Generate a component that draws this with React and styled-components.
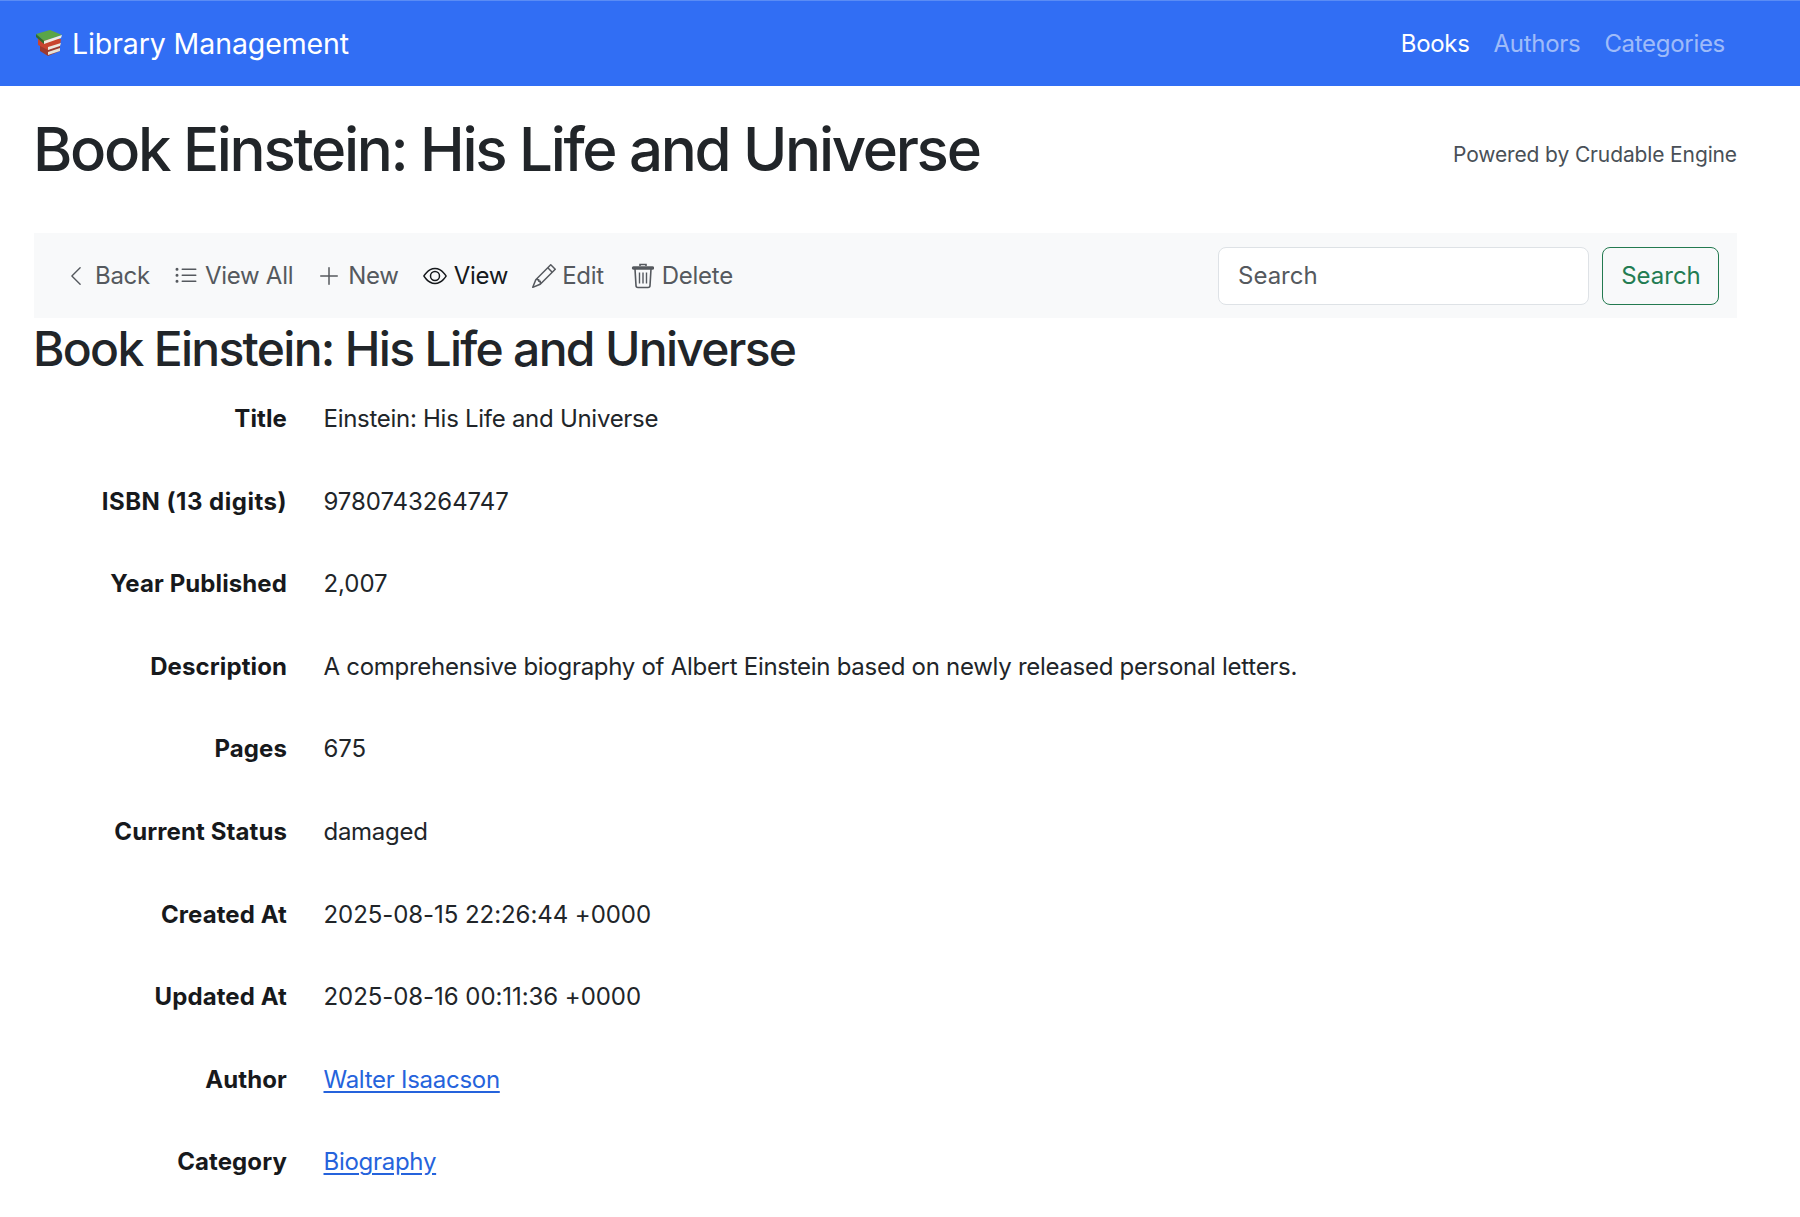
import React from "react";
import styled, { createGlobalStyle } from "styled-components";
import { BsChevronLeft, BsListUl, BsPlusLg, BsEye, BsPencil } from "react-icons/bs";

const GlobalStyle = createGlobalStyle`
  body {
    margin: 0;
    background: #fff;
    color: #212529;
    font-family: Inter, "Liberation Sans", sans-serif;
    font-size: 24px;
    line-height: 36px;
  }
`;

const Navbar = styled.nav`
  height: 86px;
  box-sizing: border-box;
  background: #316ef4;
  border-top: 1px solid #5a8cf5;
  display: flex;
  align-items: center;
  justify-content: space-between;
  padding: 0 75px 0 36px;
`;

const Brand = styled.a`
  display: flex;
  align-items: center;
  gap: 10px;
  color: #fff;
  font-size: 28.5px;
  letter-spacing: -0.1px;
`;

const NavLinks = styled.div`
  display: flex;
  gap: 24px;
`;

const NavLink = styled.a`
  color: ${(p) => (p.$active ? "#fff" : "rgba(255,255,255,0.55)")};
  font-size: 24px;
  letter-spacing: -0.3px;
`;

const Page = styled.main`
  padding: 0 63px 0 34px;
`;

const Header = styled.header`
  height: 147px;
  display: flex;
  justify-content: space-between;
  align-items: flex-start;
`;

const PageTitle = styled.h1`
  margin: 27px 0 0 -1px;
  font-size: 60px;
  line-height: 72px;
  font-weight: 500;
  letter-spacing: -2.3px;
`;

const Powered = styled.div`
  margin-top: 51px;
  font-size: 21px;
  letter-spacing: -0.13px;
  color: #495057;
`;

const Toolbar = styled.div`
  height: 85px;
  background: #f8f9fa;
  display: flex;
  align-items: center;
  justify-content: space-between;
  padding: 0 18px 0 31px;
`;

const Actions = styled.div`
  display: flex;
  align-items: center;
  gap: 24px;
`;

const Action = styled.a`
  display: flex;
  align-items: center;
  gap: ${(p) => p.$gap || 7}px;
  font-size: 24px;
  letter-spacing: -0.28px;
  color: ${(p) => (p.$active ? "#16191c" : "#55595e")};
  svg {
    display: block;
  }
`;

const SearchForm = styled.form`
  display: flex;
  gap: 13px;
`;

const SearchInput = styled.input`
  width: 371px;
  height: 58px;
  box-sizing: border-box;
  padding: 0 19px;
  border: 1.5px solid #dee2e6;
  border-radius: 8px;
  background: #fff;
  font: inherit;
  color: #212529;
  &::placeholder {
    color: #55595e;
    opacity: 1;
  }
`;

const SearchButton = styled.button`
  width: 117px;
  height: 58px;
  padding: 0 0 0 1px;
  border: 1.5px solid #237a50;
  border-radius: 8px;
  background: transparent;
  color: #237c52;
  font: inherit;
`;

const SubTitle = styled.h2`
  margin: 2px 0 0 -1px;
  font-size: 48px;
  line-height: 58px;
  font-weight: 500;
  letter-spacing: -1.7px;
`;

const Details = styled.dl`
  margin: 0;
  display: grid;
  grid-template-columns: 253px 1fr;
  column-gap: 36.5px;
  grid-auto-rows: 82.6px;
  padding-top: 23px;
`;

const Label = styled.dt`
  text-align: right;
  font-weight: 700;
  font-size: 24px;
  color: #17191c;
  letter-spacing: ${(p) => (p.$wide ? "0.5px" : "0.1px")};
`;

const Value = styled.dd`
  margin: 0;
  font-size: 24px;
  letter-spacing: ${(p) => (p.$numeric ? "-0.06px" : "-0.28px")};
`;

const Link = styled.a`
  color: #2563dc;
  text-decoration: underline;
  text-underline-offset: 3px;
`;

const BooksIcon = () => (
  <svg width="26" height="27" viewBox="0 0 26 27">
    <path d="M4 16l20-1v6l-12 5-8-5z" fill="#9c3a30" />
    <path d="M12 22l12-4v3l-12 4z" fill="#e6e2d6" />
    <path d="M2 9h23l-1 6-12 5-10-5z" fill="#c9452f" />
    <path d="M12 17l13-4-1 3-12 4z" fill="#ece9df" />
    <path d="M0 4l14-4 12 5-18 6z" fill="#5aa548" />
    <path d="M0 4l8 7v3L0 7z" fill="#2f6d2c" />
    <path d="M8 11l18-6-1 3-17 6z" fill="#efede4" />
  </svg>
);

const TrashIcon = () => (
  <svg width="26" height="26" viewBox="-4 0 26 26" fill="none" stroke="#55595e">
    <path d="M1.5 5h19" strokeWidth="3.4" strokeLinecap="round" />
    <path d="M8 3V1.5h6V3" strokeWidth="1.6" />
    <path d="M3 6l1 16.5a2 2 0 0 0 2 2h10a2 2 0 0 0 2-2L19 6" strokeWidth="1.6" />
    <path d="M7.5 9.5v11M11 9.5v11M14.5 9.5v11" strokeWidth="1.4" />
  </svg>
);

const rows = [
  { label: "Title", value: "Einstein: His Life and Universe" },
  { label: "ISBN (13 digits)", value: "9780743264747", numeric: true, wide: true },
  { label: "Year Published", value: "2,007", numeric: true },
  { label: "Description", value: "A comprehensive biography of Albert Einstein based on newly released personal letters." },
  { label: "Pages", value: "675", numeric: true },
  { label: "Current Status", value: "damaged" },
  { label: "Created At", value: "2025-08-15 22:26:44 +0000", numeric: true },
  { label: "Updated At", value: "2025-08-16 00:11:36 +0000", numeric: true },
  { label: "Author", value: <Link>Walter Isaacson</Link> },
  { label: "Category", value: <Link>Biography</Link> },
];

export default function App() {
  return (
    <>
      <GlobalStyle />
      <Navbar>
        <Brand>
          <BooksIcon />
          Library Management
        </Brand>
        <NavLinks>
          <NavLink $active>Books</NavLink>
          <NavLink>Authors</NavLink>
          <NavLink>Categories</NavLink>
        </NavLinks>
      </Navbar>
      <Page>
        <Header>
          <PageTitle>Book Einstein: His Life and Universe</PageTitle>
          <Powered>Powered by Crudable Engine</Powered>
        </Header>
        <Toolbar>
          <Actions>
            <Action $gap={8}><BsChevronLeft size={22} />Back</Action>
            <Action><BsListUl size={24} />View All</Action>
            <Action><BsPlusLg size={24} />New</Action>
            <Action $active><BsEye size={24} />View</Action>
            <Action $gap={6}><BsPencil size={24} />Edit</Action>
            <Action $gap={8}><TrashIcon />Delete</Action>
          </Actions>
          <SearchForm>
            <SearchInput placeholder="Search" />
            <SearchButton type="button">Search</SearchButton>
          </SearchForm>
        </Toolbar>
        <SubTitle>Book Einstein: His Life and Universe</SubTitle>
        <Details>
          {rows.map((row) => (
            <React.Fragment key={row.label}>
              <Label $wide={row.wide}>{row.label}</Label>
              <Value $numeric={row.numeric}>{row.value}</Value>
            </React.Fragment>
          ))}
        </Details>
      </Page>
    </>
  );
}
